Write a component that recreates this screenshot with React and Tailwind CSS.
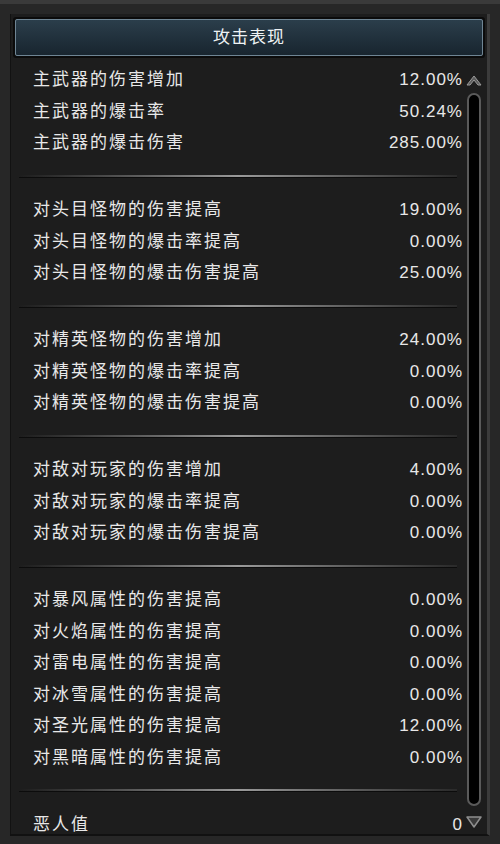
import React from "react";

const groups = [
  [
    ["主武器的伤害增加", "12.00%"],
    ["主武器的爆击率", "50.24%"],
    ["主武器的爆击伤害", "285.00%"],
  ],
  [
    ["对头目怪物的伤害提高", "19.00%"],
    ["对头目怪物的爆击率提高", "0.00%"],
    ["对头目怪物的爆击伤害提高", "25.00%"],
  ],
  [
    ["对精英怪物的伤害增加", "24.00%"],
    ["对精英怪物的爆击率提高", "0.00%"],
    ["对精英怪物的爆击伤害提高", "0.00%"],
  ],
  [
    ["对敌对玩家的伤害增加", "4.00%"],
    ["对敌对玩家的爆击率提高", "0.00%"],
    ["对敌对玩家的爆击伤害提高", "0.00%"],
  ],
  [
    ["对暴风属性的伤害提高", "0.00%"],
    ["对火焰属性的伤害提高", "0.00%"],
    ["对雷电属性的伤害提高", "0.00%"],
    ["对冰雪属性的伤害提高", "0.00%"],
    ["对圣光属性的伤害提高", "12.00%"],
    ["对黑暗属性的伤害提高", "0.00%"],
  ],
  [["恶人值", "0"]],
];

const Row = ({ label, value }) => (
  <div className="shrink-0 h-[31.5px] flex items-center justify-between pl-[22px] pr-[2px]">
    <span className="text-[17px] tracking-[2px] text-[#e8e8e8]">{label}</span>
    <span className="text-[17px] tracking-[1px] text-[#e8e8e8]">{value}</span>
  </div>
);

const Divider = () => (
  <div className="shrink-0 h-[35.5px] flex items-center px-[8px]">
    <div className="w-full h-[3px] flex flex-col">
      <div className="h-[2px] bg-gradient-to-r from-[#1d1d1d] via-[#9a9a9a] to-[#2a2a2a]" />
      <div className="h-[1px] bg-[#0c0c0c]" />
    </div>
  </div>
);

const UpArrow = () => (
  <svg width="16" height="12" viewBox="0 0 16 12">
    <path d="M1 11 L8 2 L15 11 L12 11 L8 6 L4 11 Z" fill="#5c5c5c" stroke="#9a9a9a" strokeWidth="1" strokeLinejoin="round" />
  </svg>
);

const DownArrow = () => (
  <svg width="16" height="12" viewBox="0 0 16 12">
    <path d="M1 1 L15 1 L8 11 Z" fill="#3a3a3a" stroke="#8e8e8e" strokeWidth="1.5" strokeLinejoin="round" />
  </svg>
);

export default function App() {
  return (
    <div
      className="w-[500px] h-[844px] overflow-hidden bg-[#272727] border-t-[4px] border-[#3a3a3a] pt-[10px] px-[10px]"
      style={{ fontFamily: '"Liberation Sans", "Noto Sans CJK SC", sans-serif' }}
    >
      <div className="h-[822px] overflow-hidden bg-[#1d1d1d] border-l border-[#121212] border-r-[3px] border-r-[#3b3b3b] border-b-2 border-b-[#111] flex flex-col">
        <div className="shrink-0 mx-[2px] mt-[3px] border-2 border-[#0b0b0b] rounded-[3px]">
          <div className="h-[37px] rounded-[2px] border border-[#6f8594] bg-gradient-to-b from-[#2b3e4b] to-[#18252f] flex items-center justify-center">
            <span className="text-[17px] tracking-[1px] text-[#eef2f4]">攻击表现</span>
          </div>
        </div>
        <div className="flex flex-1 min-h-0 pt-[6px]">
          <div className="flex-1 flex flex-col">
            {groups.map((g, gi) => (
              <React.Fragment key={gi}>
                {gi > 0 && <Divider />}
                {g.map(([label, value]) => (
                  <Row key={label} label={label} value={value} />
                ))}
              </React.Fragment>
            ))}
          </div>
          <div className="w-[22px] flex flex-col items-center pr-[4px]">
            <div className="shrink-0 h-[22px] flex items-end justify-center">
              <UpArrow />
            </div>
            <div className="shrink-0 mt-[7px] h-[713px] w-[14px] rounded-full border-[2px] border-[#5a5a5a] bg-black" />
            <div className="shrink-0 mt-[10px] flex justify-center">
              <DownArrow />
            </div>
          </div>
        </div>
      </div>
    </div>
  );
}
